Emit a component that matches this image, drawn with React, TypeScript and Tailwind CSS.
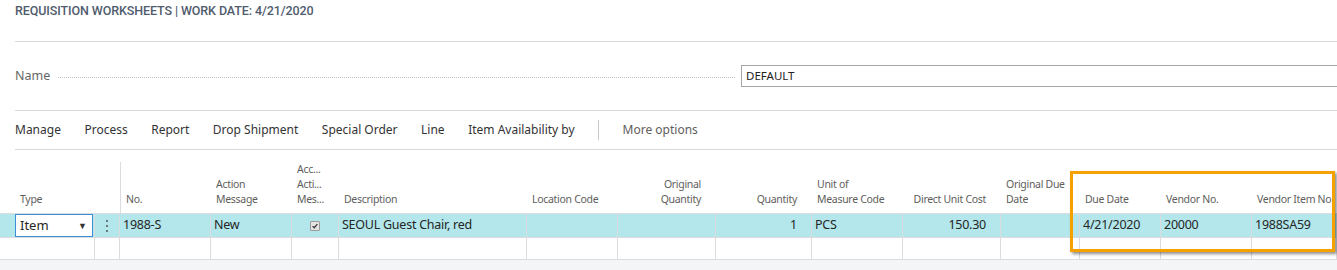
const font = { fontFamily: '"Noto Sans", "Open Sans", sans-serif' };

type Col = {
	label: string[];
	value?: string;
	align?: "left" | "right" | "center";
};

const columns: Col[] = [
	{ label: ["Type"] },
	{ label: [] },
	{ label: ["No."], value: "1988-S" },
	{ label: ["Action", "Message"], value: "New" },
	{ label: ["Acc...", "Acti...", "Mes..."], align: "center" },
	{ label: ["Description"], value: "SEOUL Guest Chair, red" },
	{ label: ["Location Code"] },
	{ label: ["Original", "Quantity"], align: "right" },
	{ label: ["Quantity"], value: "1", align: "right" },
	{ label: ["Unit of", "Measure Code"], value: "PCS" },
	{ label: ["Direct Unit Cost"], value: "150.30", align: "right" },
	{ label: ["Original Due", "Date"] },
	{ label: ["Due Date"], value: "4/21/2020" },
	{ label: ["Vendor No."], value: "20000" },
	{ label: ["Vendor Item No."], value: "1988SA59" },
];

const gridCols =
	"grid grid-cols-[95px_25px_91px_81px_47px_188px_91px_98px_96px_91px_98px_79px_81px_91px_1fr]";

const toolbar = ["Manage", "Process", "Report", "Drop Shipment", "Special Order", "Line", "Item Availability by"];

function HeaderCell(props: { col: Col; index: number }) {
	const { col, index } = props;
	const alignCls = col.align === "right" ? "items-end text-right pr-[15px]" : "items-start pl-[5px]";

	return (
		<div
			className={`flex h-full flex-col justify-end pb-[7px] text-[10.5px] leading-[15px] tracking-[-0.3px] text-[#605e5c] ${alignCls} ${
				index === 2 ? "border-l border-[#dcdce0]" : ""
			} ${index === 0 ? "pl-[20px]" : ""}`}
		>
			{col.label.map((line) => (
				<span key={line} className="whitespace-nowrap">
					{line}
				</span>
			))}
		</div>
	);
}

function DataCell(props: { col: Col; index: number }) {
	const { col, index } = props;

	if (index === 0) {
		return (
			<div className="flex h-full items-center border-r border-[#dcdce0] pl-[15px] pr-[1px]">
				<div className="flex h-[23px] w-full items-center justify-between border border-[#3a8ed6] bg-white pl-[4px] pr-[5px] text-[13px] text-[#262626]">
					<span>Item</span>
					<span className="text-[9px] text-[#333]">▼</span>
				</div>
			</div>
		);
	}

	if (index === 1) {
		return (
			<div className="flex h-full items-center justify-center border-r border-[#dcdce0]">
				<span className="flex flex-col gap-[3px]">
					<span className="size-[2px] rounded-full bg-[#555]" />
					<span className="size-[2px] rounded-full bg-[#555]" />
					<span className="size-[2px] rounded-full bg-[#555]" />
				</span>
			</div>
		);
	}

	if (index === 4) {
		return (
			<div className="flex h-full items-center border-r border-[#dcdce0] pl-[18px]">
				<span className="flex size-[10px] items-center justify-center rounded-[1px] border border-[#9a9a9a] bg-[#e3e3e3]">
					<svg viewBox="0 0 10 10" className="size-[8px]">
						<path d="M2 5.2 L4 7.2 L8 2.6" fill="none" stroke="#333" strokeWidth="1.5" />
					</svg>
				</span>
			</div>
		);
	}

	const right = col.align === "right";

	return (
		<div
			className={`flex h-full items-center border-r border-[#dcdce0] text-[12.5px] tracking-[-0.25px] text-[#262626] ${
				right ? "justify-end pr-[14px]" : "pl-[3px]"
			}`}
		>
			{col.value}
		</div>
	);
}

export default function App() {
	return (
		<div className="h-[270px] w-[1337px] overflow-hidden bg-white" style={font}>
			<div className="pl-[15px]">
				<h1
					className="flex h-[41px] items-start pt-[2px] text-[12.5px] font-medium tracking-[-0.1px] text-[#505c6d]"
					style={{ fontFamily: '"Roboto", "Liberation Sans", sans-serif' }}
				>
					REQUISITION WORKSHEETS | WORK DATE: 4/21/2020
				</h1>

				<div className="flex h-[69px] items-center border-t border-[#d8d8dc]">
					<div className="flex w-[720px] shrink-0 items-center">
						<span className="text-[12.5px] text-[#666]">Name</span>
						<span className="ml-[8px] mt-[3px] h-0 flex-1 border-t border-dotted border-[#c4c4c4]" />
					</div>
					<div className="-mr-[10px] ml-[6px] flex h-[22px] flex-1 items-center border border-[#a6a6a6] pl-[4px] text-[11.5px] text-[#222]">
						DEFAULT
					</div>
				</div>

				<div className="flex h-[40px] items-center gap-[23.5px] border-y border-[#d8d8dc] text-[12px] text-[#333]">
					{toolbar.map((item) => (
						<span key={item} className="whitespace-nowrap">
							{item}
						</span>
					))}
					<span className="h-[20px] w-px bg-[#c8c8c8]" />
					<span className="text-[#605e5c]">More options</span>
				</div>
			</div>

			<div className="relative">
				<div className={`${gridCols} h-[63px] pt-[12px]`}>
					{columns.map((col, i) => (
						<HeaderCell key={i} col={col} index={i} />
					))}
				</div>

				<div className={`${gridCols} h-[24px] border-t border-[#dcdce0] bg-[#b3e7eb]`}>
					{columns.map((col, i) => (
						<DataCell key={i} col={col} index={i} />
					))}
				</div>

				<div className={`${gridCols} h-[23px] border-y border-[#dcdce0]`}>
					{columns.map((_, i) => (
						<div key={i} className="border-r border-[#dcdce0]" />
					))}
				</div>

				<div className="h-[20px] bg-[#f4f5f7]" />

				<div className="pointer-events-none absolute left-[1070px] top-[21px] h-[81px] w-[265px] border-[3px] border-[#f5a200] shadow-[2px_2px_3px_rgba(0,0,0,0.45)]" />
			</div>
		</div>
	);
}
